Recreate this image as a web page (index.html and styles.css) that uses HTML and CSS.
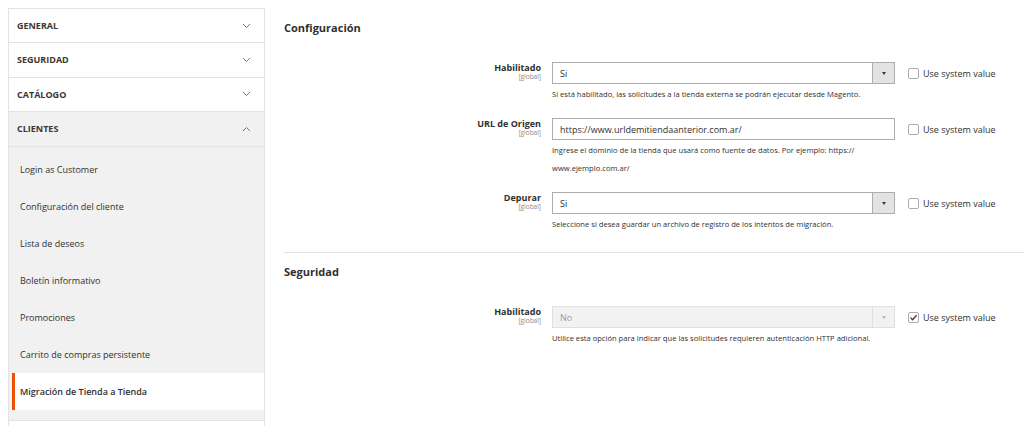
FILE: index.html
```html
<!DOCTYPE html>
<html lang="es">
<head>
  <meta charset="UTF-8" />
  <title>Configuración - Migración de Tienda a Tienda</title>
  <link rel="stylesheet" href="styles.css">
</head>
<body>
  <div class="page">
    <aside class="sidebar">
      <div class="tab">
        <span>GENERAL</span>
        <svg class="chev" width="9" height="6" viewBox="0 0 9 6"><polyline points="1,1 4.5,4.5 8,1" /></svg>
      </div>
      <div class="tab">
        <span>SEGURIDAD</span>
        <svg class="chev" width="9" height="6" viewBox="0 0 9 6"><polyline points="1,1 4.5,4.5 8,1" /></svg>
      </div>
      <div class="tab">
        <span>CATÁLOGO</span>
        <svg class="chev" width="9" height="6" viewBox="0 0 9 6"><polyline points="1,1 4.5,4.5 8,1" /></svg>
      </div>
      <div class="tab open">
        <span>CLIENTES</span>
        <svg class="chev" width="9" height="6" viewBox="0 0 9 6"><polyline points="1,5 4.5,1.5 8,5" /></svg>
      </div>
      <ul class="subitems">
        <li>Login as Customer</li>
        <li>Configuración del cliente</li>
        <li>Lista de deseos</li>
        <li>Boletín informativo</li>
        <li>Promociones</li>
        <li>Carrito de compras persistente</li>
        <li class="active">Migración de Tienda a Tienda</li>
      </ul>
      <div class="tab"></div>
    </aside>

    <main class="main">
      <section class="group">
        <h2>Configuración</h2>

        <div class="row">
          <div class="label">
            <span class="name">Habilitado</span>
            <span class="scope">[global]</span>
          </div>
          <div class="control">
            <div class="select"><span class="value">Si</span><span class="arrow"></span></div>
            <p class="note">Si está habilitado, las solicitudes a la tienda externa se podrán ejecutar desde Magento.</p>
          </div>
          <label class="system"><span class="box"></span>Use system value</label>
        </div>

        <div class="row">
          <div class="label">
            <span class="name">URL de Origen</span>
            <span class="scope">[global]</span>
          </div>
          <div class="control">
            <div class="input">https://www.urldemitiendaanterior.com.ar/</div>
            <p class="note">Ingrese el dominio de la tienda que usará como fuente de datos. Por ejemplo: https://<br>www.ejemplo.com.ar/</p>
          </div>
          <label class="system"><span class="box"></span>Use system value</label>
        </div>

        <div class="row">
          <div class="label">
            <span class="name">Depurar</span>
            <span class="scope">[global]</span>
          </div>
          <div class="control">
            <div class="select"><span class="value">Si</span><span class="arrow"></span></div>
            <p class="note">Seleccione si desea guardar un archivo de registro de los intentos de migración.</p>
          </div>
          <label class="system"><span class="box"></span>Use system value</label>
        </div>
      </section>

      <section class="group last">
        <h2>Seguridad</h2>

        <div class="row">
          <div class="label">
            <span class="name">Habilitado</span>
            <span class="scope">[global]</span>
          </div>
          <div class="control">
            <div class="select disabled"><span class="value">No</span><span class="arrow"></span></div>
            <p class="note">Utilice esta opción para indicar que las solicitudes requieren autenticación HTTP adicional.</p>
          </div>
          <label class="system">
            <span class="box checked">
              <svg width="9" height="9" viewBox="0 0 9 9"><polyline points="1.5,4.6 3.6,6.7 7.6,2.2" /></svg>
            </span>Use system value
          </label>
        </div>
      </section>
    </main>
  </div>
</body>
</html>
```

FILE: styles.css
```css
* {
  margin: 0;
  padding: 0;
  box-sizing: border-box;
}

body {
  font-family: 'Open Sans', 'Liberation Sans', sans-serif;
  color: #303030;
  background: #fff;
  overflow: hidden;
}

.page {
  display: flex;
  align-items: flex-start;
  gap: 19px;
  padding: 8px 0 0 8px;
}

/* sidebar */

.sidebar {
  width: 257px;
  flex-shrink: 0;
  border: 1px solid #e3e3e3;
  border-bottom: none;
}

.tab {
  display: flex;
  align-items: center;
  justify-content: space-between;
  height: 34.5px;
  padding: 0 13px 0 8px;
  border-bottom: 1px solid #e3e3e3;
  background: #fff;
  font-size: 9px;
  font-weight: 700;
  color: #41362f;
}

.tab:first-child {
  height: 34px;
}

.tab.open {
  background: #f1f1f1;
}

.chev {
  fill: none;
  stroke: #777;
  stroke-width: 1;
}

.subitems {
  list-style: none;
  background: #f1f1f1;
  padding: 4px 0 10px 3px;
  border-bottom: 1px solid #e3e3e3;
}

.subitems li {
  height: 37px;
  line-height: 37px;
  padding-left: 5px;
  border-left: 3px solid transparent;
  font-size: 9px;
  color: #303030;
}

.subitems li.active {
  background: #fff;
  border-left-color: #eb5202;
  font-weight: 600;
}

/* main */

.main {
  flex: 1;
  padding-top: 12px;
}

.group {
  padding-bottom: 4px;
  border-bottom: 1px solid #e3e3e3;
}

.group.last {
  border-bottom: none;
  padding-top: 11px;
}

.group h2 {
  font-size: 11px;
  font-weight: 700;
  line-height: 16px;
  color: #303030;
  margin-bottom: 26px;
}

.row {
  display: grid;
  grid-template-columns: 257px 343px 1fr;
  column-gap: 11px;
  margin-bottom: 15px;
}

.label {
  display: flex;
  flex-direction: column;
  align-items: flex-end;
}

.label .name {
  font-size: 9px;
  font-weight: 700;
  line-height: 11px;
  color: #303030;
}

.label .scope {
  font-size: 6.5px;
  line-height: 8px;
  color: #8a8a8a;
}

.select,
.input {
  display: flex;
  align-items: center;
  height: 22px;
  border: 1px solid #adadad;
  background: #fff;
  font-size: 9px;
  color: #303030;
}

.input {
  padding-left: 7px;
}

.select .value {
  flex: 1;
  padding-left: 7px;
}

.select .arrow {
  width: 22px;
  height: 100%;
  background: #e3e3e3;
  border-left: 1px solid #adadad;
  display: flex;
  align-items: center;
  justify-content: center;
}

.select .arrow::after {
  content: "";
  border-left: 2.5px solid transparent;
  border-right: 2.5px solid transparent;
  border-top: 3px solid #41362f;
}

.select.disabled {
  background: #f2f2f2;
  border-color: #e0e0e0;
  color: #9a9a9a;
}

.select.disabled .arrow {
  background: #f2f2f2;
  border-left-color: #e0e0e0;
}

.select.disabled .arrow::after {
  border-top-color: #b5b5b5;
}

.note {
  margin-top: 1px;
  font-size: 7.6px;
  line-height: 18px;
  color: #303030;
}

.system {
  display: flex;
  align-items: center;
  gap: 4px;
  height: 22px;
  padding-left: 2px;
  font-size: 9px;
  color: #303030;
}

.box {
  width: 11px;
  height: 11px;
  border: 1px solid #adadad;
  border-radius: 2px;
  background: #fff;
  display: flex;
  align-items: center;
  justify-content: center;
}

.box svg {
  fill: none;
  stroke: #41362f;
  stroke-width: 1.3;
}
```
